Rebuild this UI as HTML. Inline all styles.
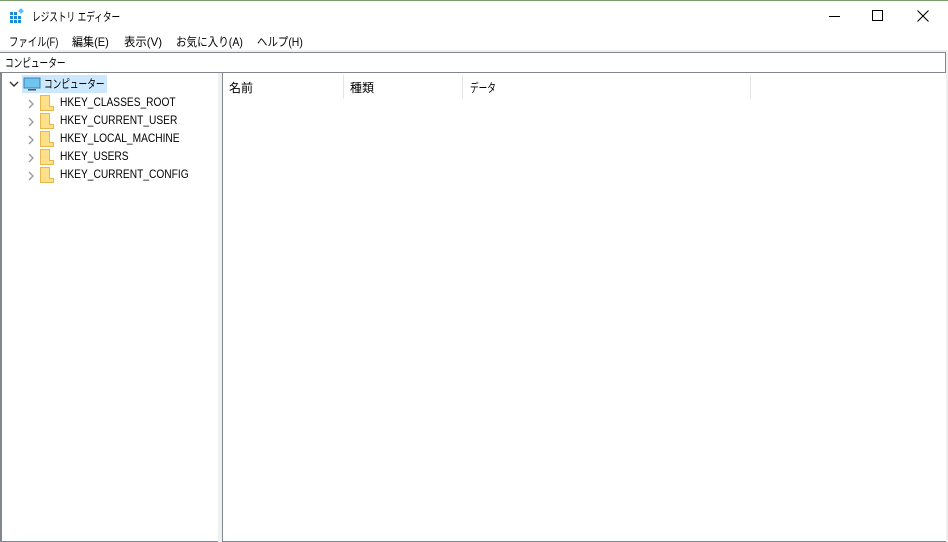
<!DOCTYPE html>
<html><head><meta charset="utf-8"><style>
*{margin:0;padding:0;box-sizing:border-box}
body{width:948px;height:542px;background:#fff;font-family:"Liberation Sans","Noto Sans CJK JP",sans-serif;font-size:12px;color:#000;position:relative;overflow:hidden}
.a{position:absolute;white-space:nowrap;transform-origin:0 50%}
</style></head><body>
<div class="a" style="left:0;top:0;width:948px;height:1px;background:#7a9a6a"></div>
<svg class="a" style="left:9px;top:8px" width="16" height="16" viewBox="0 0 16 16">
<g fill="#1a8ad4"><rect x="1" y="4" width="3" height="3"/><rect x="5" y="4" width="3" height="3"/><rect x="1" y="8" width="3" height="3"/><rect x="5" y="8" width="3" height="3"/><rect x="9" y="8" width="3" height="3"/><rect x="1" y="12" width="3" height="3"/><rect x="5" y="12" width="3" height="3"/><rect x="9" y="12" width="3" height="3"/></g>
<rect x="10" y="1" width="4" height="4" fill="#4fc3f7" transform="rotate(45 12 3)"/></svg>
<div class="a" style="left:32px;top:8px;transform:scaleX(0.72)">レジストリ エディター</div>
<div class="a" style="left:829px;top:16px;width:11px;height:1px;background:#000"></div>
<div class="a" style="left:872px;top:10px;width:11px;height:11px;border:1px solid #000"></div>
<svg class="a" style="left:917px;top:10px" width="12" height="12"><path d="M0.5 0.5L11.5 11.5M11.5 0.5L0.5 11.5" stroke="#000" stroke-width="1.1"/></svg>
<div class="a" style="left:9px;top:33px;transform:scaleX(0.78)">ファイル(F)</div>
<div class="a" style="left:72px;top:33px;transform:scaleX(0.92)">編集(E)</div>
<div class="a" style="left:124px;top:33px;transform:scaleX(0.95)">表示(V)</div>
<div class="a" style="left:176px;top:33px;transform:scaleX(0.88)">お気に入り(A)</div>
<div class="a" style="left:257px;top:33px;transform:scaleX(0.87)">ヘルプ(H)</div>
<div class="a" style="left:0;top:50px;width:948px;height:2px;background:#f0f0f0"></div>
<div class="a" style="left:0;top:52px;width:946px;height:21px;border:1px solid #828790;border-left:none"></div>
<div class="a" style="left:5px;top:54px;transform:scaleX(0.72)">コンピューター</div>
<div class="a" style="left:946px;top:50px;width:2px;height:492px;background:#f0f0f0"></div>
<div class="a" style="left:0;top:73px;width:219px;height:469px;border:1px solid #828790;border-top:none;border-left:2px solid #828790"></div>
<div class="a" style="left:218px;top:73px;width:4px;height:469px;background:#f0f0f0"></div>
<div class="a" style="left:222px;top:73px;width:724px;height:469px;border:1px solid #828790;border-top:none;border-right:none"></div>
<div class="a" style="left:22px;top:75px;width:85px;height:18px;background:#cce8ff"></div>
<svg class="a" style="left:9px;top:80px" width="10" height="8"><path d="M1 2L5 6L9 2" stroke="#333" stroke-width="1.4" fill="none"/></svg>
<svg class="a" style="left:23px;top:77px" width="18" height="14"><rect x="1" y="1" width="16" height="10" fill="#6ec6f0" stroke="#3a7fb5"/><rect x="5" y="12" width="8" height="1.5" fill="#555"/></svg>
<div class="a" style="left:44px;top:75px;transform:scaleX(0.72)">コンピューター</div>
<div id="t"></div>
<div class="a" style="left:229px;top:79px">名前</div>
<div class="a" style="left:350px;top:79px">種類</div>
<div class="a" style="left:470px;top:79px;transform:scaleX(0.72)">データ</div>
<div class="a" style="left:343px;top:75px;width:1px;height:24px;background:#e5e5e5"></div>
<div class="a" style="left:462px;top:75px;width:1px;height:24px;background:#e5e5e5"></div>
<div class="a" style="left:750px;top:75px;width:1px;height:24px;background:#e5e5e5"></div>
<script>
var k=["HKEY_CLASSES_ROOT","HKEY_CURRENT_USER","HKEY_LOCAL_MACHINE","HKEY_USERS","HKEY_CURRENT_CONFIG"],h="";
k.forEach(function(n,i){var y=94+i*18;
h+='<svg class="a" style="left:27px;top:'+(y+4)+'px" width="8" height="12"><path d="M2 2L6 6L2 10" stroke="#999" stroke-width="1.3" fill="none"/></svg>';
h+='<svg class="a" style="left:40px;top:'+(y+1)+'px" width="14" height="16"><path d="M0.5 0.5H9.5V11.5H13.5V15.5H0.5Z" fill="#ffe08a" stroke="#e8b94a"/></svg>';
h+='<div class="a" style="left:60px;top:'+(y+1)+'px;transform:scaleX(0.85)">'+n+'</div>';});
document.getElementById('t').outerHTML=h;
</script>
</body></html>
